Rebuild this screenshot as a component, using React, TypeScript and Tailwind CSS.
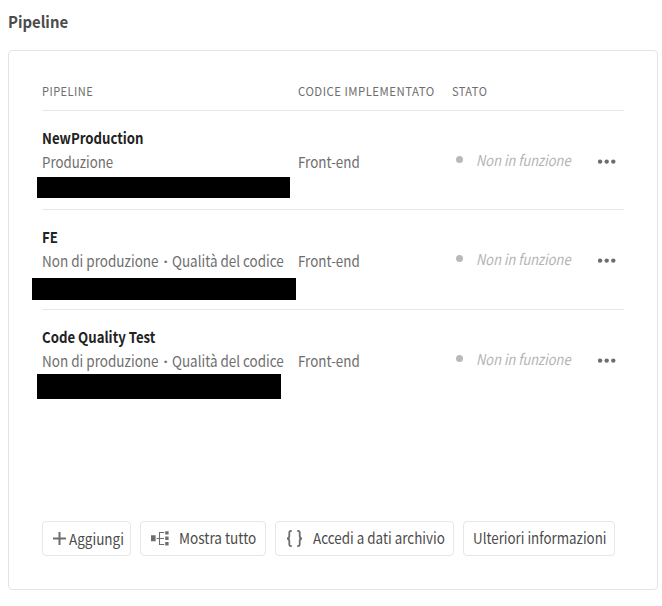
import React from "react";

type Row = { name: string; kind: React.ReactNode; bar: string };

const fit = "inline-block origin-left whitespace-nowrap";

const quality = (
  <div className="flex">
    <span className={`${fit} w-[117px] scale-x-[0.9]`}>Non di produzione</span>
    <span className="w-[13px] text-center font-['Noto_Sans'] font-bold">·</span>
    <span className={`${fit} scale-x-[0.895]`}>Qualità del codice</span>
  </div>
);

const rows: Row[] = [
  {
    name: "NewProduction",
    kind: <div><span className={`${fit} scale-x-[0.885]`}>Produzione</span></div>,
    bar: "mt-[3px] -ml-[5px] h-[21px] w-[253px]",
  },
  { name: "FE", kind: quality, bar: "mt-[5px] -ml-[10px] h-[22px] w-[264px]" },
  { name: "Code Quality Test", kind: quality, bar: "mt-[1px] -ml-[5px] h-[25px] w-[244px]" },
];

const button =
  "flex h-[35px] shrink-0 items-center whitespace-nowrap rounded-[4px] border border-[#e6e6e6] text-[15px] text-[#4b4b4b]";

function More() {
  return (
    <svg width="18" height="6" viewBox="0 0 18 6" fill="#6e6e6e">
      <circle cx="2.1" cy="2.6" r="2.2" />
      <circle cx="8.7" cy="2.6" r="2.2" />
      <circle cx="15.3" cy="2.6" r="2.2" />
    </svg>
  );
}

function Plus() {
  return (
    <svg className="shrink-0" width="13" height="13" viewBox="0 0 13 13" stroke="#6e6e6e" strokeWidth="2">
      <path d="M6.5 0v13M0 6.5h13" />
    </svg>
  );
}

function Tree() {
  return (
    <svg className="shrink-0" width="18" height="15" viewBox="0 0 18 15" fill="#6e6e6e">
      <path d="M0 4.3h4.6v6H0zM14.2 .2h3.4v3.4h-3.4zM14.2 5.6h3.4v3.4h-3.4zM14.2 11h3.4v3.4h-3.4z" />
      <path d="M5.6 7.5h7.4M13.2 1.5H8.5v12h4.7" fill="none" stroke="#6e6e6e" strokeWidth="1.1" />
    </svg>
  );
}

function Braces() {
  return (
    <svg className="shrink-0" width="17" height="17" viewBox="0 0 17 17" fill="none" stroke="#6e6e6e" strokeWidth="1.8">
      <path d="M5.8 .9H5Q3.3 .9 3.3 2.7v3.2Q3.3 8.5 1 8.5 3.3 8.5 3.3 11.1v3.2q0 1.8 1.7 1.8h.8M11.2 .9h.8Q13.7 .9 13.7 2.7v3.2q0 2.6 2.3 2.6-2.3 0-2.3 2.6v3.2q0 1.8-1.7 1.8h-.8" />
    </svg>
  );
}

export default function App() {
  return (
    <div className="h-[606px] w-[662px] overflow-hidden bg-white pt-[9px] pl-[8px] font-['Noto_Sans_CJK_SC',sans-serif]">
      <h2 className="h-[24px] text-[16px] leading-[24px] font-bold text-[#4b4b4b]">
        <span className={`${fit} scale-x-[0.93]`}>Pipeline</span>
      </h2>
      <section className="mt-[17px] flex h-[540px] w-[650px] flex-col rounded-[4px] border border-[#e4e4e4] pr-[33px] pl-[33px]">
        <div className="flex h-[60px] border-b border-[#e6e6e6] pt-[30px] text-[12px] leading-[20px] tracking-[0.5px] text-[#6e6e6e]">
          <div className="w-[256px]"><span className={`${fit} scale-x-[0.92]`}>PIPELINE</span></div>
          <div className="w-[154px]"><span className={`${fit} scale-x-[0.95]`}>CODICE IMPLEMENTATO</span></div>
          <div><span className={`${fit} scale-x-[0.92]`}>STATO</span></div>
        </div>
        {rows.map((r, i) => (
          <div
            key={r.name}
            className={`flex pt-[15px] text-[15px] leading-[24px] whitespace-nowrap text-[#6e6e6e] ${
              i === 0 ? "h-[99px] border-b border-[#e6e6e6]" : i === 1 ? "h-[100px] border-b border-[#e6e6e6]" : "h-[211px]"
            }`}
          >
            <div className="w-[256px] shrink-0">
              <div className="font-bold text-[#222]"><span className={`${fit} scale-x-[0.88]`}>{r.name}</span></div>
              {r.kind}
              <div className={`bg-black ${r.bar}`} />
            </div>
            <div className="w-[158px] shrink-0 pt-[24px]"><span className={`${fit} scale-x-[0.895]`}>Front-end</span></div>
            <div className="flex h-[46px] w-[142px] shrink-0 items-end text-[#b3b3b3] italic">
              <div className="mr-[13px] mb-[9px] h-[7px] w-[7px] rounded-full bg-[#b9b9b9]" />
              <span className={`${fit} scale-x-[0.86]`}>Non in funzione</span>
            </div>
            <div className="pt-[33px]"><More /></div>
          </div>
        ))}
        <div className="flex gap-[9px]">
          <button className={`${button} w-[89px] pl-[10px]`}>
            <Plus />
            <span className={`${fit} mt-[2px] ml-[3px] scale-x-[0.9]`}>Aggiungi</span>
          </button>
          <button className={`${button} w-[126px] pl-[10px]`}>
            <Tree />
            <span className={`${fit} ml-[10px] scale-x-[0.905]`}>Mostra tutto</span>
          </button>
          <button className={`${button} w-[179px] pl-[10px]`}>
            <Braces />
            <span className={`${fit} ml-[10px] scale-x-[0.895]`}>Accedi a dati archivio</span>
          </button>
          <button className={`${button} w-[152px] pl-[9px]`}>
            <span className={`${fit} scale-x-[0.89]`}>Ulteriori informazioni</span>
          </button>
        </div>
      </section>
    </div>
  );
}
